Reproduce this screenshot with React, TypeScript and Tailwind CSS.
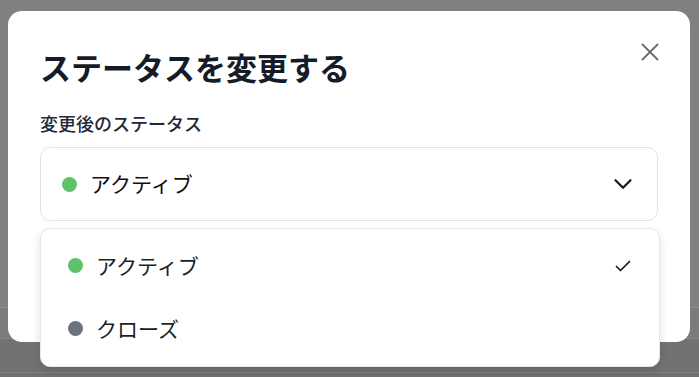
import { ChevronDown } from 'lucide-react';

type Status = { label: string; dot: string; selected?: boolean };

const STATUSES: Status[] = [
  { label: 'アクティブ', dot: 'bg-[#5ec26a]', selected: true },
  { label: 'クローズ', dot: 'bg-[#6b7280]' },
];

function CloseIcon() {
  return (
    <svg width="18" height="18" viewBox="0 0 18 18" fill="none" stroke="#6b6b6b" strokeWidth="1.8" strokeLinecap="round">
      <path d="M1.5 1.5 16.5 16.5M16.5 1.5 1.5 16.5" />
    </svg>
  );
}

function CheckIcon() {
  return (
    <svg width="16" height="12" viewBox="0 0 16 12" fill="none" stroke="#111827" strokeWidth="1.7" strokeLinecap="round" strokeLinejoin="round">
      <polyline points="1.5,6.5 5.5,10.5 14.5,1.5" />
    </svg>
  );
}

export default function App() {
  return (
    <div
      className="relative w-[699px] h-[377px] overflow-hidden"
      style={{ fontFamily: '"Noto Sans CJK JP", "Noto Sans", sans-serif' }}
    >
      {/* page underneath the overlay */}
      <div className="flex flex-col h-full">
        <div className="h-[307px] bg-[#808080]" />
        <div className="h-[31px] bg-[#7b7b7b] border-t border-[#8c8c8c]" />
        <div className="h-[34px] bg-[#717371] border-t border-[#858585]" />
        <div className="flex-1 bg-[#6f716f] border-t border-[#7e7e7e]" />
      </div>

      {/* modal */}
      <div className="absolute left-[8px] top-[11px] w-[682px] h-[331px] bg-white rounded-[14px] px-8 pt-[37px]">
        <button className="absolute right-[31px] top-[32px]">
          <CloseIcon />
        </button>
        <h2 className="text-[31px] leading-[37px] font-bold text-[#161b28]">ステータスを変更する</h2>
        <div className="mt-[26px] text-[18px] leading-[24px] font-medium text-[#1f2937]">変更後のステータス</div>
        <div className="mt-3 h-[74px] w-[618px] border border-[#e2e3e6] rounded-[10px] flex items-center pl-[21px] pr-[19px]">
          <span className="w-[15px] h-[15px] rounded-full bg-[#5ec26a]" />
          <span className="ml-[13px] text-[21px] text-[#111111] flex-1">アクティブ</span>
          <ChevronDown size={30} strokeWidth={1.8} color="#111827" />
        </div>
      </div>

      {/* open select menu */}
      <div className="absolute left-[40px] top-[228px] w-[620px] bg-white border border-[#e7e8ea] rounded-[10px] shadow-[0_4px_10px_rgba(0,0,0,0.12)] pt-[5px] pb-[6px]">
        {STATUSES.map(s => (
          <div key={s.label} className="h-[63px] flex items-center pl-[27px] pr-[28px]">
            <span className={`w-[15px] h-[15px] rounded-full ${s.dot}`} />
            <span className="ml-[13px] text-[21px] text-[#1a1f2b] flex-1">{s.label}</span>
            {s.selected && <CheckIcon />}
          </div>
        ))}
      </div>
    </div>
  );
}
